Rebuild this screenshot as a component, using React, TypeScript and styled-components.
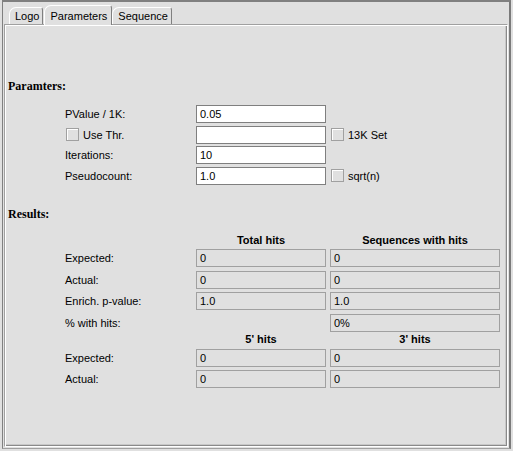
import React from "react";
import styled, { createGlobalStyle } from "styled-components";

const Global = createGlobalStyle`
  html, body { margin: 0; padding: 0; background: #e0e0e0; }
  body { font-family: "Liberation Sans", Arial, sans-serif; font-size: 11px; color: #000; }
`;

const Page = styled.div`
  width: 513px;
  height: 451px;
  background: #e0e0e0;
  overflow: hidden;
`;

const Frame = styled.div`
  margin-left: 2px;
  width: 505px;
  height: 446px;
  border-top: 2px solid #808080;
  border-left: 1px solid #808080;
  border-right: 2px solid #7a7a7a;
  border-bottom: 1px solid #a0a0a0;
  display: flex;
  flex-direction: column;
  padding-left: 1px;
`;

const TabStrip = styled.div`
  display: flex;
  align-items: flex-end;
  height: 22px;
  padding-left: 5px;
`;

const Tab = styled.div<{ $active?: boolean }>`
  height: ${(p) => (p.$active ? 19 : 16)}px;
  padding: 0 ${(p) => (p.$active ? 4 : 3)}px 0 5px;
  margin-right: ${(p) => (p.$active ? 0 : 1)}px;
  display: flex;
  align-items: center;
  border-top: 1px solid #fff;
  border-left: 1px solid #fff;
  border-right: 1px solid #808080;
  border-radius: 7px 3px 0 0;
  background: #e0e0e0;
  position: relative;
  z-index: ${(p) => (p.$active ? 2 : 1)};
  margin-bottom: ${(p) => (p.$active ? -1 : 0)}px;
  font-size: 11px;
  line-height: 14px;
  white-space: nowrap;
`;

const Panel = styled.div`
  flex: 1;
  margin-right: 1px;
  margin-bottom: 1px;
  border-top: 1px solid #a0a0a0;
  border-left: 1px solid #a0a0a0;
  border-right: 1px solid #fff;
  border-bottom: 1px solid #fff;
  box-shadow: inset 1px 1px 0 #fff, inset -1px -1px 0 #8a8a8a, inset -2px -2px 0 #c8c8c8;
  display: flex;
  flex-direction: column;
  padding: 2px 2px 2px 2px;
`;

const Heading = styled.div<{ $top: number }>`
  margin-top: ${(p) => p.$top}px;
  padding-left: 1px;
  font-family: "Liberation Serif", "Times New Roman", serif;
  font-weight: bold;
  font-size: 12px;
  line-height: 14px;
  height: 14px;
`;

const ParamGrid = styled.div`
  margin-top: 12px;
  padding-left: 58px;
  display: grid;
  grid-template-columns: 131px 130px auto;
  grid-auto-rows: 18px;
  row-gap: 2.67px;
  column-gap: 0;
  align-items: center;
`;

const Label = styled.div`
  line-height: 14px;
  display: flex;
  align-items: center;
  white-space: nowrap;
`;

const Box = styled.span`
  width: 11px;
  height: 11px;
  border: 1px solid #a0a0a0;
  box-shadow: inset 1px 1px 0 #fff;
  background: #e0e0e0;
  margin-right: 4px;
  margin-left: 1px;
  flex: none;
`;

const Check = styled.div`
  display: flex;
  align-items: center;
  padding-left: 4px;
  white-space: nowrap;
`;

const Input = styled.div`
  box-sizing: border-box;
  height: 18px;
  border: 1px solid #7f7f7f;
  background: #fff;
  padding-left: 3px;
  line-height: 16px;
`;

const ResultGrid = styled.div`
  margin-top: 13px;
  padding-left: 58px;
  display: grid;
  grid-template-columns: 127px 130px 170px;
  grid-template-rows: 12px 18px 18px 18px 18px 10px 18px 18px;
  row-gap: 3.5px;
  column-gap: 4px;
  align-items: center;
`;

const ColHead = styled.div`
  font-weight: bold;
  text-align: center;
  line-height: 14px;
  white-space: nowrap;
  align-self: end;
  margin-bottom: -1px;
`;

const Out = styled.div`
  box-sizing: border-box;
  height: 18px;
  border: 1px solid #a0a0a0;
  background: #e0e0e0;
  padding-left: 3px;
  line-height: 16px;
`;

const Empty = styled.div``;

export default function App() {
  return (
    <Page>
      <Global />
      <Frame>
        <TabStrip>
          <Tab>Logo</Tab>
          <Tab $active>Parameters</Tab>
          <Tab>Sequence</Tab>
        </TabStrip>
        <Panel>
          <Heading $top={52}>Paramters:</Heading>
          <ParamGrid>
            <Label>PValue / 1K:</Label>
            <Input>0.05</Input>
            <Empty />
            <Label>
              <Box />
              Use Thr.
            </Label>
            <Input />
            <Check>
              <Box />
              13K Set
            </Check>
            <Label>Iterations:</Label>
            <Input>10</Input>
            <Empty />
            <Label>Pseudocount:</Label>
            <Input>1.0</Input>
            <Check>
              <Box />
              sqrt(n)
            </Check>
          </ParamGrid>
          <Heading $top={22}>Results:</Heading>
          <ResultGrid>
            <Empty />
            <ColHead>Total hits</ColHead>
            <ColHead>Sequences with hits</ColHead>
            <Label>Expected:</Label>
            <Out>0</Out>
            <Out>0</Out>
            <Label>Actual:</Label>
            <Out>0</Out>
            <Out>0</Out>
            <Label>Enrich. p-value:</Label>
            <Out>1.0</Out>
            <Out>1.0</Out>
            <Label>% with hits:</Label>
            <Empty />
            <Out>0%</Out>
            <Empty />
            <ColHead>5' hits</ColHead>
            <ColHead>3' hits</ColHead>
            <Label>Expected:</Label>
            <Out>0</Out>
            <Out>0</Out>
            <Label>Actual:</Label>
            <Out>0</Out>
            <Out>0</Out>
          </ResultGrid>
        </Panel>
      </Frame>
    </Page>
  );
}
